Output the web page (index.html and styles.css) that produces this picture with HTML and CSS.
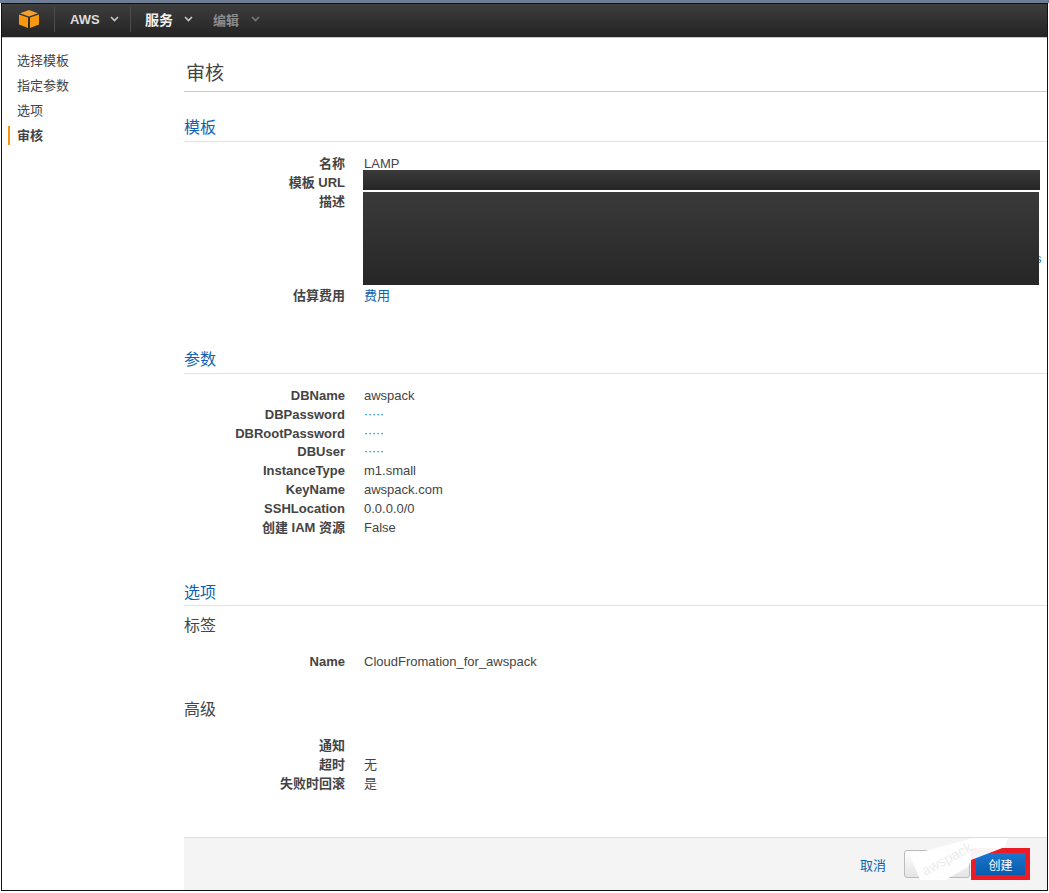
FILE: index.html
```html
<!DOCTYPE html>
<html lang="zh">
<head>
<meta charset="utf-8">
<title>审核</title>
<link rel="stylesheet" href="styles.css">
</head>
<body>
<div class="band"></div>
<div class="frame">
  <header class="topbar">
    <div class="logo-cell">
      <svg class="logo" width="20" height="18" viewBox="0 0 20 18">
        <path d="M1 3.2 L10 0 L19 3.2 L10 6.4 Z" fill="#f6a02b"/>
        <path d="M0 4.4 L9 7.6 L9 18 L0 14.6 Z" fill="#f7980f"/>
        <path d="M20 4.4 L11 7.6 L11 18 L20 14.6 Z" fill="#f7980f"/>
      </svg>
    </div>
    <div class="menu menu-aws">AWS<svg class="caret" width="9" height="6" viewBox="0 0 9 6"><path d="M1 1 L4.5 4.5 L8 1" fill="none" stroke="#c8c8c8" stroke-width="1.6"/></svg></div>
    <div class="menu menu-svc">服务<svg class="caret" width="9" height="6" viewBox="0 0 9 6"><path d="M1 1 L4.5 4.5 L8 1" fill="none" stroke="#c8c8c8" stroke-width="1.6"/></svg></div>
    <div class="menu menu-edit">编辑<svg class="caret" width="9" height="6" viewBox="0 0 9 6"><path d="M1 1 L4.5 4.5 L8 1" fill="none" stroke="#777" stroke-width="1.6"/></svg></div>
  </header>
  <div class="body">
    <nav class="side">
      <div class="step">选择模板</div>
      <div class="step">指定参数</div>
      <div class="step">选项</div>
      <div class="step current">审核</div>
    </nav>
    <main class="main">
      <h1 class="title">审核</h1>
      <section class="sec sec-template">
        <h2 class="sec-head">模板</h2>
        <div class="rows">
          <div class="row"><div class="k">名称</div><div class="v">LAMP</div></div>
          <div class="row"><div class="k">模板 URL</div><div class="v"><div class="mask mask-url"></div></div></div>
          <div class="row row-desc"><div class="k">描述</div><div class="v"><span class="peek">s</span><div class="mask mask-desc"></div></div></div>
          <div class="row"><div class="k">估算费用</div><div class="v"><a class="link">费用</a></div></div>
        </div>
      </section>
      <section class="sec sec-params">
        <h2 class="sec-head">参数</h2>
        <div class="rows">
          <div class="row"><div class="k">DBName</div><div class="v">awspack</div></div>
          <div class="row"><div class="k">DBPassword</div><div class="v dots">·····</div></div>
          <div class="row"><div class="k">DBRootPassword</div><div class="v dots">·····</div></div>
          <div class="row"><div class="k">DBUser</div><div class="v dots">·····</div></div>
          <div class="row"><div class="k">InstanceType</div><div class="v">m1.small</div></div>
          <div class="row"><div class="k">KeyName</div><div class="v">awspack.com</div></div>
          <div class="row"><div class="k">SSHLocation</div><div class="v">0.0.0.0/0</div></div>
          <div class="row"><div class="k">创建 IAM 资源</div><div class="v">False</div></div>
        </div>
      </section>
      <section class="sec sec-options">
        <h2 class="sec-head">选项</h2>
        <h3 class="sub sub-tags">标签</h3>
        <div class="rows rows-tags">
          <div class="row"><div class="k">Name</div><div class="v">CloudFromation_for_awspack</div></div>
        </div>
        <h3 class="sub sub-adv">高级</h3>
        <div class="rows rows-adv">
          <div class="row"><div class="k">通知</div><div class="v"></div></div>
          <div class="row"><div class="k">超时</div><div class="v">无</div></div>
          <div class="row"><div class="k">失败时回滚</div><div class="v">是</div></div>
        </div>
      </section>
      <footer class="foot">
        <a class="link cancel">取消</a>
        <button class="btn btn-prev"></button>
        <button class="btn btn-create">创建</button>
        <svg class="smear" width="154" height="52" viewBox="0 0 154 52">
          <path d="M27 42 L17 17 L80 0 L115 0 L112 9 L78 22 L75 29 L52 42 Z" fill="#fff" fill-opacity="0.95"/>
          <text class="smear-text" x="32" y="38" transform="rotate(-28 32 38)">awspack</text>
        </svg>
      </footer>
    </main>
  </div>
</div>
</body>
</html>
```
FILE: styles.css
```css
* { box-sizing: border-box; }
html, body { margin: 0; padding: 0; background: #fff; }
body {
  width: 1049px;
  height: 893px;
  overflow: hidden;
  font-family: "Liberation Sans", "Noto Sans CJK SC", sans-serif;
  font-size: 13px;
  color: #444;
}
.band { height: 3px; background: #6f7e92; }
.frame {
  width: 1047px;
  height: 888px;
  margin-left: 1px;
  border-top: 1px solid #111;
  border-left: 1px solid #111;
  border-right: 1px solid #111;
  border-bottom: 1px solid #111;
  display: flex;
  flex-direction: column;
}
.topbar {
  height: 34px;
  flex: none;
  display: flex;
  align-items: center;
  padding-bottom: 3px;
  background: linear-gradient(#3e3e3e, #232323);
  border-bottom: 1px solid #c6c6c6;
}
.logo-cell {
  width: 53px;
  height: 25px;
  display: flex;
  align-items: center;
  padding-left: 17px;
  border-right: 1px solid #4c4c4c;
}
.logo { display: block; }
.menu {
  height: 25px;
  display: flex;
  align-items: center;
  font-weight: bold;
  font-size: 13px;
  color: #dcdcdc;
}
.caret { margin-left: 10px; }
.menu-aws { width: 76px; padding-left: 15px; border-right: 1px solid #4c4c4c; }
.menu-svc { width: 67px; padding-left: 14px; color: #f0f0f0; font-size: 14px; }
.menu-svc .caret { margin-left: 11px; }
.menu-edit { padding-left: 15px; color: #8c8c8c; }
.menu-edit .caret { margin-left: 12px; }
.body {
  flex: 1;
  display: flex;
  min-height: 0;
}
.side {
  width: 182px;
  flex: none;
  padding: 11px 0 0 6px;
}
.step {
  height: 25px;
  line-height: 24px;
  padding-left: 9px;
  font-size: 13px;
  color: #444;
}
.current {
  font-weight: bold;
  border-left: 2px solid #f7930e;
  padding-left: 7px;
  height: 19px;
  line-height: 19px;
  margin-top: 2px;
}
.main {
  flex: 1;
  min-width: 0;
  display: flex;
  flex-direction: column;
}
.title {
  margin: 0;
  height: 54px;
  padding: 24px 0 0 2px;
  font-size: 19px;
  line-height: 24px;
  font-weight: normal;
  color: #444;
  border-bottom: 1px solid #ccc;
}
.sec-head {
  margin: 0;
  height: 28px;
  font-size: 16px;
  line-height: 26px;
  font-weight: normal;
  color: #0f62b0;
  border-bottom: 1px solid #e2e2e2;
}
.sub {
  margin: 0;
  font-size: 16px;
  line-height: 22px;
  font-weight: normal;
  color: #444;
}
.sec-template { margin-top: 23px; }
.sec-template .sec-head { height: 27px; }
.sec-params { margin-top: 41px; }
.sec-params .sec-head { line-height: 28px; }
.sec-options { margin-top: 44px; }
.sec-options .sec-head { height: 26px; }
.rows { margin-top: 12px; }
.sec-params .rows { margin-top: 12px; }
.row {
  display: grid;
  grid-template-columns: 161px 1fr;
  column-gap: 19px;
  height: 19px;
  line-height: 19px;
}
.sec-params .row { height: 18.8px; }
.row-desc { height: 94px; }
.k { text-align: right; font-weight: bold; color: #444; white-space: nowrap; }
.v { position: relative; color: #444; white-space: nowrap; }
.dots { color: #0f62b0; font-size: 12px; }
.link { color: #0f62b0; }
.mask {
  position: absolute;
  left: -1px;
  background: linear-gradient(#3a3a3a, #262626);
}
.mask-url { top: -3px; width: 677px; height: 20px; }
.mask-desc { top: 0; width: 676px; height: 93px; }
.peek { position: absolute; left: 671px; top: 57px; color: #1a78d8; }
.sub-tags { margin-top: 9px; }
.rows-tags { margin-top: 15px; }
.sub-adv { margin-top: 28px; }
.rows-adv { margin-top: 15px; }
.foot {
  position: relative;
  flex: 1;
  margin-top: 44px;
  background: #f4f4f4;
  border-top: 1px solid #dedede;
  display: flex;
  align-items: center;
  justify-content: flex-end;
  padding-right: 17px;
}
.cancel { margin-right: 18px; font-size: 13px; }
.btn {
  border-radius: 3px;
  font-family: inherit;
  font-size: 12px;
  padding: 0;
}
.btn-prev {
  width: 66px;
  height: 28px;
  background: linear-gradient(#fff, #e4e4e4);
  border: 1px solid #bbb;
}
.btn-create {
  width: 59px;
  height: 32px;
  margin-left: 1px;
  color: #fff;
  border: 5px solid #ed1c24;
  border-radius: 0;
  background: linear-gradient(#1a78d0, #0a5aac);
}
.smear { position: absolute; right: 0; top: 0; pointer-events: none; overflow: visible; }
.smear-text {
  font-size: 14px;
  fill: #ececec;
}
```
